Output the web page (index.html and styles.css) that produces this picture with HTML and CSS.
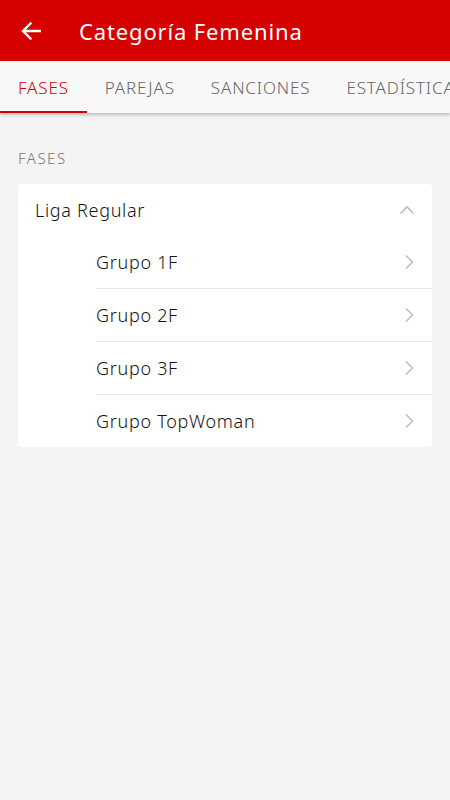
FILE: index.html
```html
<!DOCTYPE html>
<html>
<head>
<title>Categoría Femenina</title>
<meta name=viewport content="width=device-width, initial-scale=1">
<link rel="stylesheet" href="styles.css">
</head>
<body>

<div class=toolbar>
 <span class=back>
  <svg width="20" height="18" viewBox="0 0 20 18"><path d="M19 9H2.5M9.5 1.5L2 9l7.5 7.5" fill="none" stroke="#fff" stroke-width="2.4" stroke-linecap="square"/></svg>
 </span>
 <h1 class=title>Categoría Femenina</h1>
</div>

<div class=tabs>
 <div class="tab active">FASES</div>
 <div class=tab>PAREJAS</div>
 <div class=tab>SANCIONES</div>
 <div class=tab>ESTADÍSTICAS</div>
</div>

<div class=content>
 <div class=section>FASES</div>
 <div class=card>
  <div class=group>
   <span>Liga Regular</span>
   <svg class=chev width="16" height="10" viewBox="0 0 16 10"><path d="M1.5 8.5L8 2l6.5 6.5" fill="none" stroke="#bdbdbd" stroke-width="1.6"/></svg>
  </div>
  <div class=item><span>Grupo 1F</span><svg class=chev width="10" height="16" viewBox="0 0 10 16"><path d="M2 1.5L8.5 8 2 14.5" fill="none" stroke="#bdbdbd" stroke-width="1.6"/></svg></div>
  <div class=item><span>Grupo 2F</span><svg class=chev width="10" height="16" viewBox="0 0 10 16"><path d="M2 1.5L8.5 8 2 14.5" fill="none" stroke="#bdbdbd" stroke-width="1.6"/></svg></div>
  <div class=item><span>Grupo 3F</span><svg class=chev width="10" height="16" viewBox="0 0 10 16"><path d="M2 1.5L8.5 8 2 14.5" fill="none" stroke="#bdbdbd" stroke-width="1.6"/></svg></div>
  <div class=item><span>Grupo TopWoman</span><svg class=chev width="10" height="16" viewBox="0 0 10 16"><path d="M2 1.5L8.5 8 2 14.5" fill="none" stroke="#bdbdbd" stroke-width="1.6"/></svg></div>
 </div>
</div>

</body>
</html>
```

FILE: styles.css
```css
html, body {
 margin:0;
 height:100%;
}
body {
 background-color:#f4f4f4;
 color:#141414;
 font-family:"Noto Sans",sans-serif;
 font-weight:300;
 overflow:hidden;
}
.toolbar {
 height:61px;
 background-color:#d50000;
 display:flex;
 align-items:center;
}
.back {
 width:79px;
 display:flex;
 padding-left:21px;
 box-sizing:border-box;
}
.title {
 margin:0;
 color:white;
 font-weight:normal;
 font-size:22px;
 letter-spacing:0.85px;
}
.tabs {
 height:52px;
 background-color:#f8f8f8;
 display:flex;
 white-space:nowrap;
 overflow:hidden;
 box-shadow:0 2px 3px rgba(0,0,0,0.22);
 position:relative;
}
.tab {
 padding:0 18px;
 font-size:17px;
 letter-spacing:0.85px;
 color:#666;
 display:flex;
 align-items:center;
}
.tab.active {
 color:#d50000;
 box-shadow:inset 0 -2px 0 #d50000;
}
.content {
 padding:0 18px;
}
.section {
 padding-top:35px;
 height:36px;
 font-size:15px;
 color:#777;
 letter-spacing:1.5px;
}
.card {
 background-color:white;
 border-radius:4px;
}
.group, .item {
 display:flex;
 align-items:center;
 justify-content:space-between;
 font-size:18px;
 letter-spacing:0.7px;
 height:52px;
}
.group {
 padding:0 17px;
}
.item {
 margin-left:78px;
 padding-right:18px;
 border-top:1px solid #e3e3e3;
}
.group + .item {
 border-top:none;
}
```
